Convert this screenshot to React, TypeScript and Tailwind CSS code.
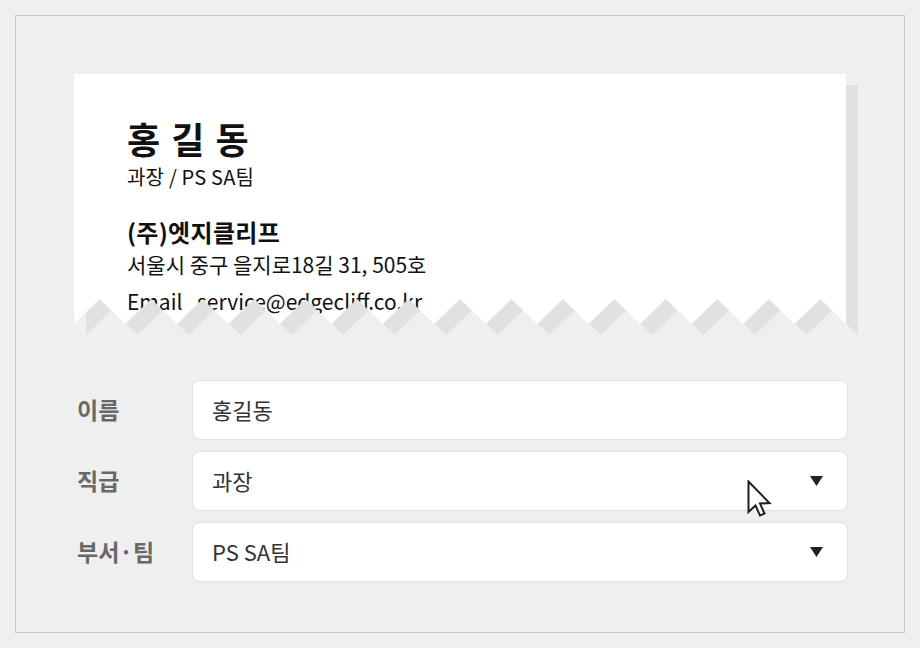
import React from "react";

const KR = "font-['Noto_Sans_CJK_KR',sans-serif]";

// 카드 하단 톱니 모양 (찢어진 종이 효과)
const CARD_W = 772;
const CARD_H = 250;
const TEETH = 15;
const DEPTH = 25;

function tornEdge() {
  const step = CARD_W / TEETH;
  const pts = ["0px 0px", `${CARD_W}px 0px`, `${CARD_W}px ${CARD_H}px`];
  for (let k = TEETH - 1; k >= 0; k--) {
    const x0 = k * step;
    pts.push(`${x0 + step / 2}px ${CARD_H - DEPTH}px`);
    pts.push(`${x0}px ${CARD_H}px`);
  }
  return `polygon(${pts.join(", ")})`;
}

function Caret() {
  return (
    <svg width="13" height="10" viewBox="0 0 13 10" className="shrink-0">
      <polygon points="0,0 13,0 6.5,10" fill="#222" />
    </svg>
  );
}

function Field({ label, value, select }: { label: string; value: string; select?: boolean }) {
  return (
    <div className="flex items-center h-[60px]">
      <div className="w-[115px] text-[23px] font-bold text-[#686868] -mt-[2px]">{label}</div>
      <div className="flex-1 h-full flex items-center justify-between bg-white border border-[#e2e2e2] rounded-lg pl-[19px] pr-6">
        <span className="text-[22px] text-[#333] -mt-[2px]">{value}</span>
        {select && <Caret />}
      </div>
    </div>
  );
}

export default function App() {
  const clip = tornEdge();

  return (
    <div className={`w-[920px] h-[648px] bg-[#efefef] p-[15px] ${KR}`}>
      <div className="w-[890px] h-[618px] border border-[#c8c8c8] pl-[58px] pt-[58px] pr-[56px]">
        {/* 명함 카드 */}
        <div className="relative w-[784px] h-[261px]">
          <div
            className="absolute left-[12px] top-[11px] w-[772px] h-[250px] bg-[#e1e1e1]"
            style={{ clipPath: clip }}
          />
          <div
            className="relative w-[772px] h-[250px] bg-white pl-[53px] pt-[42px] text-[#111]"
            style={{ clipPath: clip }}
          >
            <div className="text-[36px] font-bold leading-[44px] tracking-[1.5px]">홍 길 동</div>
            <div className="mt-[5px] text-[20px] leading-[24px] tracking-[0.2px]">과장 / PS SA팀</div>
            <div className="mt-[28px] text-[24px] font-bold leading-[30px] tracking-[0.3px]">(주)엣지클리프</div>
            <div className="mt-[3px] text-[21px] leading-[28px]">서울시 중구 을지로18길 31, 505호</div>
            <div className="mt-[9px] text-[21px] leading-[28px] flex">
              <span className="w-[70px]">Email</span>
              <span>service@edgecliff.co.kr</span>
            </div>
          </div>
        </div>

        {/* 입력 폼 */}
        <div className="relative mt-[45px] ml-[3px] w-[771px] flex flex-col gap-[11px]">
          <Field label="이름" value="홍길동" />
          <Field label="직급" value="과장" select />
          <Field label="부서·팀" value="PS SA팀" select />

          <svg
            className="absolute left-[670px] top-[100px]"
            width="25"
            height="38"
            viewBox="0 0 25 38"
          >
            <path
              d="M1.5 1.5 L1.5 32 L8.5 25.5 L13 35.5 L17.5 33.5 L13 23.5 L22.5 23 Z"
              fill="#fff"
              stroke="#1e1e1e"
              strokeWidth="2"
              strokeLinejoin="miter"
            />
          </svg>
        </div>
      </div>
    </div>
  );
}
